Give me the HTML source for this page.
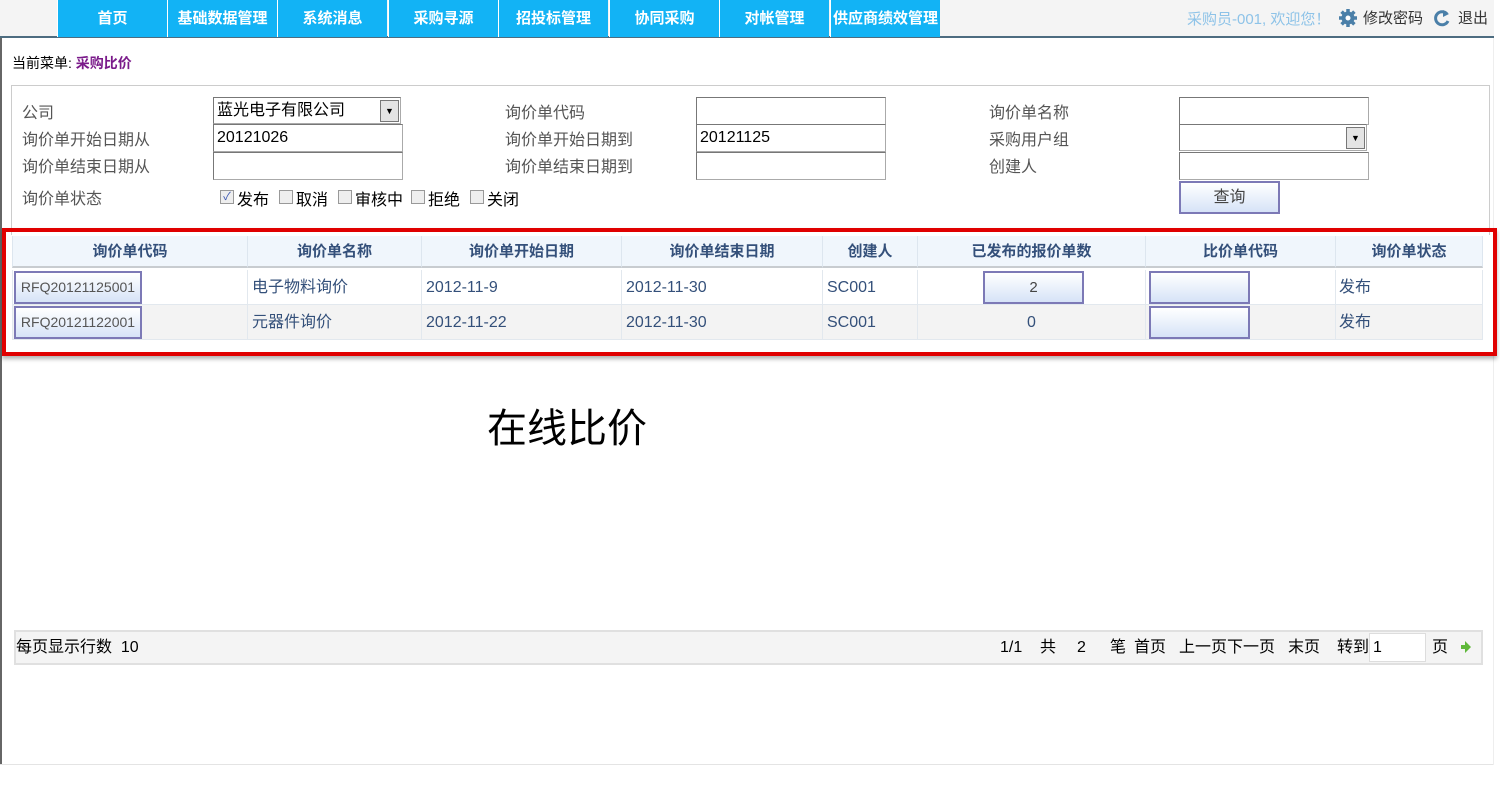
<!DOCTYPE html>
<html><head><meta charset="utf-8"><style>
*{margin:0;padding:0;box-sizing:border-box}
body{width:1500px;height:812px;background:#fff;position:relative;overflow:hidden;font-family:"Liberation Sans","Noto Sans CJK SC",sans-serif;font-size:15px;color:#333}
.a{position:absolute;white-space:nowrap}
.nav{left:0;top:0;width:1494px;height:38px;background:#f4f4f4;border-bottom:2px solid #4d6c80}
.tab{top:0;height:37px;width:110px;background:#12b3f5;color:#fff;font-weight:bold;font-size:15px;text-align:center;line-height:37px;border-left:1px solid #fff}
.lbl{color:#555;font-size:16px}
.inp{height:28px;border:1px solid #aaa;border-top-color:#777;border-left-color:#777;background:#fff;font-size:16px;line-height:26px;padding-left:3px;color:#000}
.dd{position:absolute;right:1px;top:2px;width:19px;height:22px;background:#e4e4e4;border:1px solid #777;font-size:9px;line-height:20px;text-align:center;color:#000}
.cb{position:absolute;top:190px;width:14px;height:14px;border:1px solid #999;background:#eee;font-size:11px;line-height:12px;color:#3a55b0;text-align:center}
.ct{top:186px;font-size:16px;color:#000}
.th{top:236px;height:32px;background:#f0f6fc;color:#34507a;font-weight:bold;font-size:15px;text-align:center;line-height:32px;border-right:1px solid #dde6ef;border-bottom:2px solid #c8ccd0}
.td{height:35px;line-height:35px;font-size:16px;color:#34507a;padding-left:4px;border-right:1px solid #e2e8ee;border-bottom:1px solid #e2e8ee}
.btn{border:2px solid #7c79b6;background:linear-gradient(#fff,#d6e3f7);color:#444;text-align:center}
.pg{top:637px;font-size:16px;line-height:22px;height:22px;color:#000}
</style></head><body>
<div class="a nav"></div>
<div class="a tab" style="left:57px">首页</div>
<div class="a tab" style="left:167px">基础数据管理</div>
<div class="a tab" style="left:277px">系统消息</div>
<div class="a tab" style="left:388px">采购寻源</div>
<div class="a tab" style="left:498px">招投标管理</div>
<div class="a tab" style="left:609px">协同采购</div>
<div class="a tab" style="left:719px">对帐管理</div>
<div class="a tab" style="left:830px">供应商绩效管理</div>
<div class="a" style="left:1187px;top:8px;color:#8ec3e8;font-size:15px">采购员-001, 欢迎您！</div>
<svg class="a" style="left:1338px;top:8px" width="20" height="20" viewBox="0 0 20 20"><circle cx="10" cy="10" r="6.5" fill="#4a7fa8"/><g stroke="#4a7fa8" stroke-width="3.5"><line x1="10" y1="1" x2="10" y2="19"/><line x1="1" y1="10" x2="19" y2="10"/><line x1="3.6" y1="3.6" x2="16.4" y2="16.4"/><line x1="16.4" y1="3.6" x2="3.6" y2="16.4"/></g><circle cx="10" cy="10" r="2.5" fill="#fff"/></svg>
<div class="a" style="left:1363px;top:7px;color:#333;font-size:15px">修改密码</div>
<svg class="a" style="left:1433px;top:8px" width="18" height="20" viewBox="0 0 18 20"><path d="M14 6 A6.5 6.5 0 1 0 15 13" fill="none" stroke="#4a7fa8" stroke-width="3"/><path d="M10 2 L16 6 L10 9 Z" fill="#4a7fa8"/></svg>
<div class="a" style="left:1458px;top:7px;color:#333;font-size:15px">退出</div>
<div class="a" style="left:0;top:38px;width:2px;height:727px;background:#666"></div>
<div class="a" style="left:0;top:764px;width:1494px;height:1px;background:#e4e4e4"></div>
<div class="a" style="left:1493px;top:38px;width:1px;height:727px;background:#eee"></div>
<div class="a" style="left:12px;top:53px;font-size:14px;color:#000">当前菜单: <span style="color:#7a1a8a;font-weight:bold">采购比价</span></div>
<div class="a" style="left:11px;top:85px;width:1479px;height:150px;border:1px solid #ccc;border-bottom:none"></div>
<div class="a lbl" style="left:22px;top:99px">公司</div>
<div class="a lbl" style="left:22px;top:126px">询价单开始日期从</div>
<div class="a lbl" style="left:22px;top:153px">询价单结束日期从</div>
<div class="a lbl" style="left:22px;top:185px">询价单状态</div>
<div class="a inp" style="left:213px;top:97px;width:188px;height:27px">蓝光电子有限公司<div class="dd">▼</div></div>
<div class="a inp" style="left:213px;top:124px;width:190px">20121026</div>
<div class="a inp" style="left:213px;top:152px;width:190px"></div>
<div class="a cb" style="left:220px">✓</div><div class="a ct" style="left:237px">发布</div>
<div class="a cb" style="left:279px"></div><div class="a ct" style="left:296px">取消</div>
<div class="a cb" style="left:338px"></div><div class="a ct" style="left:355px">审核中</div>
<div class="a cb" style="left:411px"></div><div class="a ct" style="left:428px">拒绝</div>
<div class="a cb" style="left:470px"></div><div class="a ct" style="left:487px">关闭</div>
<div class="a lbl" style="left:505px;top:99px">询价单代码</div>
<div class="a lbl" style="left:505px;top:126px">询价单开始日期到</div>
<div class="a lbl" style="left:505px;top:153px">询价单结束日期到</div>
<div class="a inp" style="left:696px;top:97px;width:190px"></div>
<div class="a inp" style="left:696px;top:124px;width:190px">20121125</div>
<div class="a inp" style="left:696px;top:152px;width:190px"></div>
<div class="a lbl" style="left:989px;top:99px">询价单名称</div>
<div class="a lbl" style="left:989px;top:126px">采购用户组</div>
<div class="a lbl" style="left:989px;top:153px">创建人</div>
<div class="a inp" style="left:1179px;top:97px;width:190px"></div>
<div class="a inp" style="left:1179px;top:124px;width:188px;height:27px"><div class="dd">▼</div></div>
<div class="a inp" style="left:1179px;top:152px;width:190px"></div>
<div class="a btn" style="left:1179px;top:181px;width:101px;height:33px;line-height:29px;font-size:16px">查询</div>
<div class="a" style="left:2px;top:228px;width:1495px;height:128px;border:4px solid #e00000;box-shadow:0 3px 4px rgba(0,0,0,.3)"></div>
<div class="a th" style="left:12px;width:236px;border-left:1px solid #dde6ef">询价单代码</div>
<div class="a th" style="left:248px;width:174px">询价单名称</div>
<div class="a th" style="left:422px;width:200px">询价单开始日期</div>
<div class="a th" style="left:622px;width:201px">询价单结束日期</div>
<div class="a th" style="left:823px;width:95px">创建人</div>
<div class="a th" style="left:918px;width:228px">已发布的报价单数</div>
<div class="a th" style="left:1146px;width:190px">比价单代码</div>
<div class="a th" style="left:1336px;width:147px">询价单状态</div>
<div class="a" style="left:12px;top:270px;width:1471px;height:35px;background:#fff"></div>
<div class="a" style="left:12px;top:305px;width:1471px;height:35px;background:#f3f3f3"></div>
<div class="a td" style="left:12px;top:270px;width:236px;border-left:1px solid #e2e8ee"></div>
<div class="a td" style="left:12px;top:305px;width:236px;border-left:1px solid #e2e8ee"></div>
<div class="a btn" style="left:14px;top:271px;width:128px;height:33px;line-height:29px;font-size:14px;color:#555">RFQ20121125001</div>
<div class="a btn" style="left:14px;top:306px;width:128px;height:33px;line-height:29px;font-size:14px;color:#555">RFQ20121122001</div>
<div class="a td" style="left:248px;top:270px;width:174px">电子物料询价</div>
<div class="a td" style="left:248px;top:305px;width:174px">元器件询价</div>
<div class="a td" style="left:422px;top:270px;width:200px">2012-11-9</div>
<div class="a td" style="left:422px;top:305px;width:200px">2012-11-22</div>
<div class="a td" style="left:622px;top:270px;width:201px">2012-11-30</div>
<div class="a td" style="left:622px;top:305px;width:201px">2012-11-30</div>
<div class="a td" style="left:823px;top:270px;width:95px">SC001</div>
<div class="a td" style="left:823px;top:305px;width:95px">SC001</div>
<div class="a td" style="left:918px;top:270px;width:228px"></div>
<div class="a td" style="left:918px;top:305px;width:228px;text-align:center;padding:0">0</div>
<div class="a btn" style="left:983px;top:271px;width:101px;height:33px;line-height:29px;font-size:15px">2</div>
<div class="a td" style="left:1146px;top:270px;width:190px"></div>
<div class="a td" style="left:1146px;top:305px;width:190px"></div>
<div class="a btn" style="left:1149px;top:271px;width:101px;height:33px"></div>
<div class="a btn" style="left:1149px;top:306px;width:101px;height:33px"></div>
<div class="a td" style="left:1336px;top:270px;width:147px;padding-left:3px">发布</div>
<div class="a td" style="left:1336px;top:305px;width:147px;padding-left:3px">发布</div>
<div class="a" style="left:487px;top:396px;font-size:40px;color:#000">在线比价</div>
<div class="a" style="left:14px;top:630px;width:1469px;height:35px;background:#f4f4f4;border:2px solid #e0e0e0"></div>
<div class="a pg" style="left:16px">每页显示行数&nbsp; 10</div>
<div class="a pg" style="left:1000px">1/1</div>
<div class="a pg" style="left:1040px">共</div>
<div class="a pg" style="left:1077px">2</div>
<div class="a pg" style="left:1110px">笔</div>
<div class="a pg" style="left:1134px">首页</div>
<div class="a pg" style="left:1179px">上一页下一页</div>
<div class="a pg" style="left:1288px">末页</div>
<div class="a pg" style="left:1337px">转到</div>
<div class="a" style="left:1369px;top:633px;width:57px;height:29px;background:#fff;border:1px solid #ddd;font-size:16px;line-height:27px;padding-left:3px;color:#000">1</div>
<div class="a pg" style="left:1432px">页</div>
<svg class="a" style="left:1461px;top:641px" width="10" height="12" viewBox="0 0 10 12"><path d="M0 4 H4 V0 L10 6 L4 12 V8 H0 Z" fill="#5fb83a"/></svg>
</body></html>
